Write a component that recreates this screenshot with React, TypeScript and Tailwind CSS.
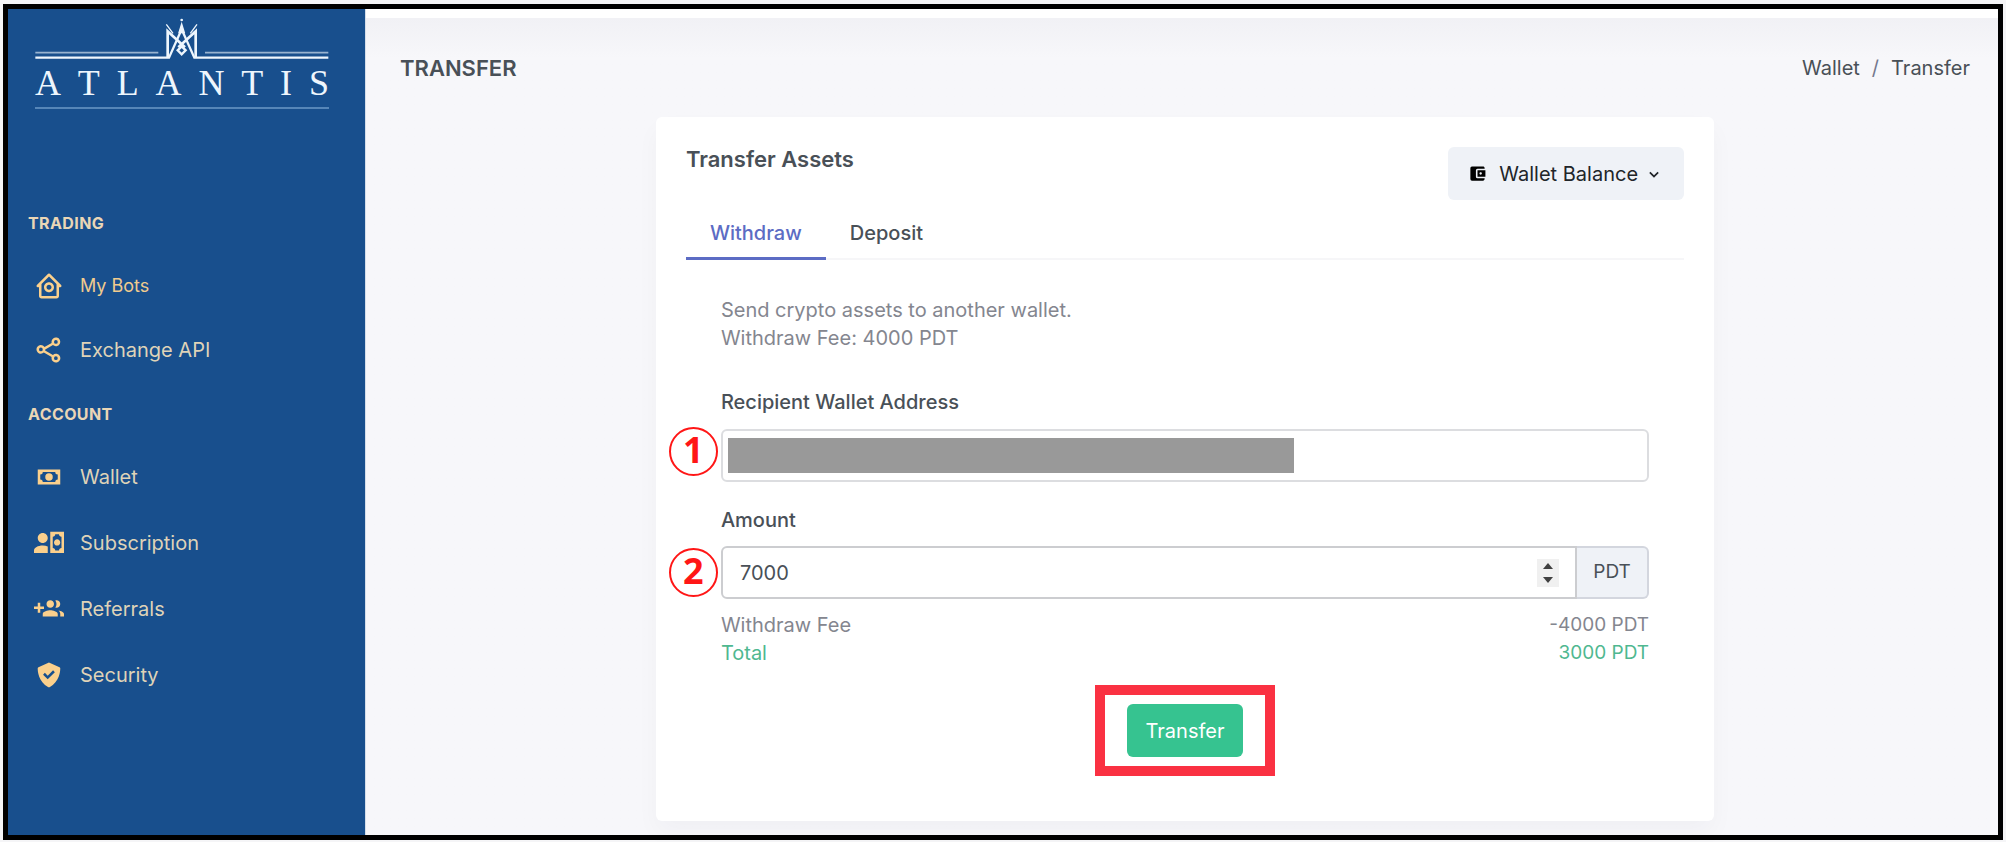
import { useState } from "react";
import type { ReactNode } from "react";
import { BiChevronDown, BiHomeCircle, BiShareAlt, BiSolidCheckShield } from "react-icons/bi";
import { MdAccountBalanceWallet } from "react-icons/md";

const WITHDRAW_FEE = 4000;

function CashIcon() {
  return (
    <svg viewBox="0 0 24 24" fill="currentColor" className="w-[30px] h-[30px]">
      <path d="M3,6H21V18H3V6M12,9A3,3 0 0,1 15,12A3,3 0 0,1 12,15A3,3 0 0,1 9,12A3,3 0 0,1 12,9M7,8A2,2 0 0,1 5,10V14A2,2 0 0,1 7,16H17A2,2 0 0,1 19,14V10A2,2 0 0,1 17,8H7Z" />
    </svg>
  );
}

function AccountCashIcon() {
  return (
    <svg viewBox="0 0 24 24" fill="currentColor" className="w-[30px] h-[30px]">
      <path d="M11 8C11 10.21 9.21 12 7 12C4.79 12 3 10.21 3 8C3 5.79 4.79 4 7 4C9.21 4 11 5.79 11 8M11 14.72V20H0V18C0 15.79 3.13 14 7 14C8.5 14 9.87 14.27 11 14.72M24 20H13V3H24V20M16 11.5C16 12.88 17.12 14 18.5 14C19.88 14 21 12.88 21 11.5C21 10.12 19.88 9 18.5 9C17.12 9 16 10.12 16 11.5M22 7C20.9 7 20 6.11 20 5H17C17 6.11 16.11 7 15 7V16C16.11 16 17 16.9 17 18H20C20 16.9 20.9 16 22 16V7Z" />
    </svg>
  );
}

function AccountPlusIcon() {
  return (
    <svg viewBox="0 0 24 24" fill="currentColor" className="w-[30px] h-[30px]">
      <path d="M13 13C11 13 7 14 7 16V18H19V16C19 14 15 13 13 13M19.62 13.16C20.45 13.88 21 14.82 21 16V18H24V16C24 14.46 21.63 13.5 19.62 13.16M13 11C14.66 11 16 9.66 16 8C16 6.34 14.66 5 13 5C11.34 5 10 6.34 10 8C10 9.66 11.34 11 13 11M18 11C19.66 11 21 9.66 21 8C21 6.34 19.66 5 18 5C17.68 5 17.37 5.05 17.08 5.14C17.65 5.95 18 6.94 18 8C18 9.06 17.65 10.04 17.08 10.86C17.37 10.95 17.68 11 18 11M8 10H5V7H3V10H0V12H3V15H5V12H8V10Z" />
    </svg>
  );
}

function Logo() {
  return (
    <a href="#" className="block text-[#eef6fd]">
      <svg viewBox="106 51 882 126" fill="none" stroke="currentColor" className="w-full">
        <path d="M107 158H476M616 158H986" strokeWidth="5" opacity="0.6" />
        <path d="M107 173H508L546 88L584 173H986" strokeWidth="7" />
        <path d="M504 172V94L556 142M588 172V94L536 142" strokeWidth="8" />
        <path d="M500 73L520 100M592 73L572 100" strokeWidth="4" />
        <path d="M546 72L538 98H554Z" fill="currentColor" strokeWidth="4" />
        <path d="M546 139L558 151L546 163L534 151Z" strokeWidth="7" />
        <circle cx="546" cy="60" r="4" fill="currentColor" stroke="none" />
      </svg>
      <div className="flex justify-between mt-1 font-['Liberation_Serif',serif] text-4xl leading-10">
        {"ATLANTIS".split("").map((letter, i) => (
          <span key={i}>{letter}</span>
        ))}
      </div>
      <div className="mt-1 h-0.5 bg-[#5686b8]" />
    </a>
  );
}

function NavTitle({ children }: { children: ReactNode }) {
  return (
    <h2 className="px-5 text-base leading-6 font-bold tracking-wide text-[#ead6b6]">{children}</h2>
  );
}

function NavItem({ icon, label, active }: { icon: ReactNode; label: string; active?: boolean }) {
  return (
    <li>
      <a href="#" className="flex items-center gap-4 pl-[26px] h-[30px] text-[#fbd08c]">
        {icon}
        <span className={active ? "text-lg text-[#f0cb8e]" : "text-xl text-[#dfd3b8]"}>{label}</span>
      </a>
    </li>
  );
}

function Step({ className, children }: { className: string; children: ReactNode }) {
  return (
    <span
      className={`absolute -left-[52px] w-[49px] h-[49px] pb-1 flex items-center justify-center rounded-full border-2 border-[#ff1616] text-[#ff1616] font-['Open_Sans',sans-serif] font-bold text-4xl leading-none ${className}`}
    >
      {children}
    </span>
  );
}

export default function App() {
  const [tab, setTab] = useState("Withdraw");
  const [amount, setAmount] = useState(7000);

  return (
    <div className="min-h-screen flex bg-[#f5f5f7] pt-1 px-[3px] pb-[2px] font-[Inter,sans-serif] text-[#495057]">
      <div className="flex-1 flex border-[5px] border-black bg-[#f7f7fa]">
        <aside className="w-[357px] shrink-0 bg-[#184f8d]">
          <div className="pl-[27px] pr-9 pt-2">
            <Logo />
          </div>
          <nav className="pt-[102px]">
            <NavTitle>TRADING</NavTitle>
            <ul className="flex flex-col gap-[34px] mt-9 mb-[37px]">
              <NavItem icon={<BiHomeCircle size={30} />} label="My Bots" active />
              <NavItem icon={<BiShareAlt size={30} />} label="Exchange API" />
            </ul>
            <NavTitle>ACCOUNT</NavTitle>
            <ul className="flex flex-col gap-9 mt-9">
              <NavItem icon={<CashIcon />} label="Wallet" />
              <NavItem icon={<AccountCashIcon />} label="Subscription" />
              <NavItem icon={<AccountPlusIcon />} label="Referrals" />
              <NavItem icon={<BiSolidCheckShield size={30} />} label="Security" />
            </ul>
          </nav>
        </aside>

        <div className="flex-1 flex flex-col border-l border-[#d5deea]">
          <div className="h-[9px] bg-white" />
          <main className="flex-1 pl-[34px] pr-7 pt-9 pb-3 bg-linear-to-b from-[#f1f1f5] to-[#f7f7fa] to-[40px]">
            <div className="flex items-center justify-between mb-[35px] leading-7">
              <h1 className="text-[22px] font-semibold">TRANSFER</h1>
              <nav className="flex gap-3 text-xl leading-7">
                <a href="#">Wallet</a>
                <span className="text-[#74788d]">/</span>
                <a href="#">Transfer</a>
              </nav>
            </div>

            <section className="w-[67.4%] mx-auto p-[30px] pb-[45px] rounded-md bg-white shadow-[0_12px_24px_rgba(18,38,63,0.03)]">
              <div className="flex items-start justify-between">
                <h2 className="text-[22px] leading-6 font-semibold">Transfer Assets</h2>
                <button className="flex items-center h-[53px] px-5 rounded-md bg-[#eff2f7] text-xl text-[#212529]">
                  <MdAccountBalanceWallet size={19} className="mr-3 text-black" />
                  Wallet Balance
                  <BiChevronDown size={20} className="ml-1.5" />
                </button>
              </div>

              <div className="flex mt-[9px] shadow-[inset_0_-2px_0_#f6f6f8] text-xl leading-7 font-medium">
                {["Withdraw", "Deposit"].map((name) => (
                  <button
                    key={name}
                    onClick={() => setTab(name)}
                    className={
                      tab === name
                        ? "px-6 py-2.5 border-b-3 border-[#5c6cc4] text-[#5c6cc4]"
                        : "px-6 py-2.5 border-b-3 border-transparent"
                    }
                  >
                    {name}
                  </button>
                ))}
              </div>

              <form className="px-[35px] pt-9 text-xl" onSubmit={(e) => e.preventDefault()}>
                <p className="leading-7 text-[#84868f]">
                  Send crypto assets to another wallet.
                  <br />
                  Withdraw Fee: {WITHDRAW_FEE} PDT
                </p>

                <label htmlFor="recipient" className="block mt-9 mb-[13px] leading-7 font-medium">
                  Recipient Wallet Address
                </label>
                <div className="relative">
                  <Step className="-top-0.5">1</Step>
                  <input
                    id="recipient"
                    type="text"
                    className="block w-full h-[53px] px-[18px] rounded-md border-2 border-[#dcdde0] bg-white outline-none"
                  />
                  <div className="absolute left-[7px] top-[9px] w-[61%] h-[35px] bg-[#999]" />
                </div>

                <label htmlFor="amount" className="block mt-6 mb-3 leading-7 font-medium">
                  Amount
                </label>
                <div className="relative flex h-[53px]">
                  <Step className="top-0.5">2</Step>
                  <div className="flex-1 flex items-center pr-4 rounded-l-md border-2 border-[#cccdd0] bg-white">
                    <input
                      id="amount"
                      type="number"
                      value={amount}
                      onChange={(e) => setAmount(Number(e.target.value))}
                      className="flex-1 px-[17px] outline-none [appearance:textfield]"
                    />
                    <div className="flex flex-col justify-center gap-2 w-[22px] h-7 bg-[#f0f0f0] text-[#404040]">
                      <button type="button" aria-label="Increase" onClick={() => setAmount(amount + 1)} className="flex justify-center">
                        <svg viewBox="0 0 10 6" fill="currentColor" className="w-2.5 h-1.5"><path d="M0 6L5 0L10 6Z" /></svg>
                      </button>
                      <button type="button" aria-label="Decrease" onClick={() => setAmount(amount - 1)} className="flex justify-center">
                        <svg viewBox="0 0 10 6" fill="currentColor" className="w-2.5 h-1.5"><path d="M0 0H10L5 6Z" /></svg>
                      </button>
                    </div>
                  </div>
                  <span className="flex items-center justify-center w-[72px] rounded-r-md border-2 border-l-0 border-[#d3d6de] bg-[#eff2f7] text-[19px]">
                    PDT
                  </span>
                </div>

                <div className="flex justify-between mt-3 leading-7 text-[#84868f]">
                  <span>Withdraw Fee</span>
                  <span className="text-[19px]">-{WITHDRAW_FEE} PDT</span>
                </div>
                <div className="flex justify-between leading-7 text-[#4fb890]">
                  <span>Total</span>
                  <span className="text-[19px]">{amount - WITHDRAW_FEE} PDT</span>
                </div>

                <div className="w-fit mx-auto mt-[18px] px-[22px] py-[9px] border-10 border-[#fa3142]">
                  <button type="submit" className="block h-[53px] px-[19px] rounded-md bg-[#36c390] text-white">
                    Transfer
                  </button>
                </div>
              </form>
            </section>
          </main>
        </div>
      </div>
    </div>
  );
}
